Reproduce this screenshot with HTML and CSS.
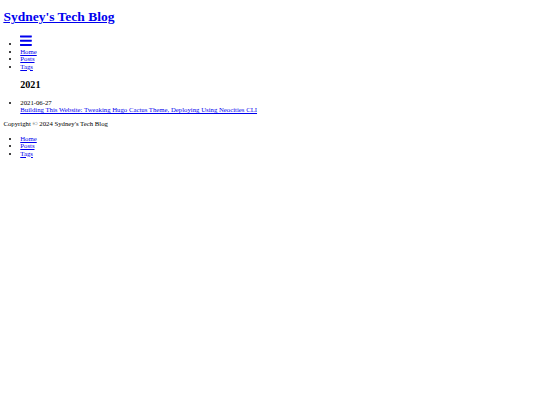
FILE: index.html
```html
<!DOCTYPE html>
<html lang="en">
<head>
<meta charset="utf-8">
<title>Sydney's Tech Blog</title>
<link rel="stylesheet" href="styles.css">
</head>
<body>
<header class="site-header">
  <h1 class="site-title"><a href="#">Sydney's Tech Blog</a></h1>
  <nav class="site-nav">
    <ul class="nav-list">
      <li><a href="#" class="menu-icon"><svg class="icon-bars" viewBox="0 0 448 512" aria-hidden="true"><path fill="currentColor" d="M16 132h416c8.837 0 16-7.163 16-16V76c0-8.837-7.163-16-16-16H16C7.163 60 0 67.163 0 76v40c0 8.837 7.163 16 16 16zm0 160h416c8.837 0 16-7.163 16-16v-40c0-8.837-7.163-16-16-16H16c-8.837 0-16 7.163-16 16v40c0 8.837 7.163 16 16 16zm0 160h416c8.837 0 16-7.163 16-16v-40c0-8.837-7.163-16-16-16H16c-8.837 0-16 7.163-16 16v40c0 8.837 7.163 16 16 16z"/></svg></a></li>
      <li><a href="#">Home</a></li>
      <li><a href="#">Posts</a></li>
      <li><a href="#">Tags</a></li>
    </ul>
  </nav>
</header>
<main class="archive">
  <div class="year-group">
    <h2 class="year">2021</h2>
  </div>
  <ul class="post-list">
    <li>
      <div class="post-date">2021-06-27</div>
      <a href="#">Building This Website: Tweaking Hugo Cactus Theme, Deploying Using Neocities CLI</a>
    </li>
  </ul>
</main>
<footer class="site-footer">
  <div class="copyright">Copyright © 2024 Sydney's Tech Blog</div>
  <nav class="footer-nav">
    <ul class="nav-list footer-list">
      <li><a href="#">Home</a></li>
      <li><a href="#">Posts</a></li>
      <li><a href="#">Tags</a></li>
    </ul>
  </nav>
</footer>
</body>
</html>
```
FILE: styles.css
```css
body {
  margin: 3.375px;
  font-family: "Liberation Serif", "Times New Roman", serif;
  font-size: 6.75px;
  color: #000;
  background: #fff;
}

a {
  color: #0000ee;
}

.site-title {
  font-size: 13.5px;
  margin: 6px 0 9px;
}

.nav-list {
  margin: 6.75px 0;
  padding-left: 16.875px;
  line-height: 7.5px;
}

.footer-list {
  margin-top: 7.75px;
}

.post-list {
  margin: 6.75px 0;
  padding-left: 16.875px;
}

.icon-bars {
  font-size: 13.5px;
  width: 0.875em;
  height: 1em;
  vertical-align: -0.125em;
  overflow: visible;
  display: inline-block;
}

.year-group {
  padding-left: 16.875px;
}

.year {
  font-size: 10.125px;
  margin: 8.4px 0 9.4px;
}
```
